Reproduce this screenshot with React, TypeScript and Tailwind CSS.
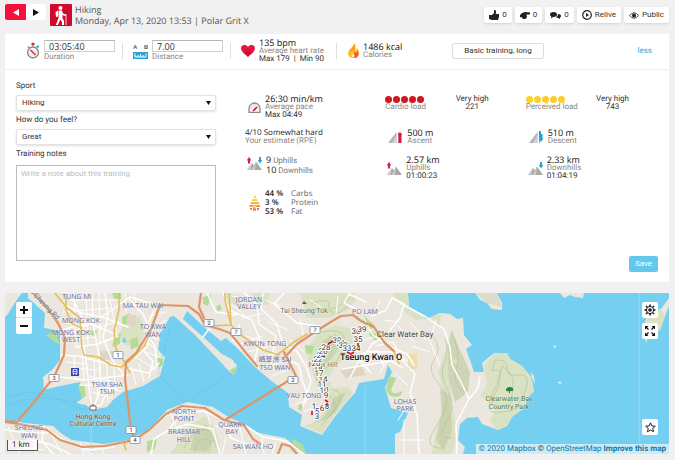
import type { ReactNode } from 'react'

interface StatProps {
  icon?: ReactNode
  value: string
  label: string
  extra?: string
}

interface MapLabel {
  x: number
  y: number
  text: string
}

const DISTRICTS: MapLabel[] = [
  { x: 77, y: 299, text: 'TUNG MI' },
  { x: 143, y: 308, text: 'MA TAU WAI' },
  { x: 81, y: 323, text: 'MONG KOK' },
  { x: 71, y: 335, text: 'MONG KOK' },
  { x: 71, y: 342, text: 'WEST' },
  { x: 153, y: 329, text: 'TO KWA' },
  { x: 153, y: 337, text: 'WAN' },
  { x: 107, y: 387, text: 'TSIM SHA' },
  { x: 107, y: 394, text: 'TSUI' },
  { x: 29, y: 430, text: 'SHEUNG' },
  { x: 29, y: 438, text: 'WAN' },
  { x: 184, y: 414, text: 'NORTH' },
  { x: 184, y: 421, text: 'POINT' },
  { x: 184, y: 434, text: 'BRAEMAR' },
  { x: 184, y: 442, text: 'HILL' },
  { x: 232, y: 427, text: 'QUARRY' },
  { x: 232, y: 434, text: 'BAY' },
  { x: 253, y: 449, text: 'SAI WAN HO' },
  { x: 249, y: 302, text: 'JORDAN' },
  { x: 249, y: 309, text: 'VALLEY' },
  { x: 265, y: 346, text: 'KWUN TONG' },
  { x: 275, y: 362, text: '晒草灣 SAI' },
  { x: 275, y: 370, text: 'TSO WAN' },
  { x: 304, y: 398, text: 'YAU TONG' },
  { x: 365, y: 314, text: 'PO LAM' },
  { x: 405, y: 404, text: 'LOHAS' },
  { x: 405, y: 411, text: 'PARK' },
]

const SHIELDS: MapLabel[] = [
  { x: 209, y: 323, text: '2' },
  { x: 118, y: 355, text: '1' },
  { x: 54, y: 378, text: '3' },
  { x: 131, y: 430, text: '1' },
  { x: 135, y: 440, text: '4' },
  { x: 236, y: 332, text: '7' },
  { x: 315, y: 330, text: '7' },
  { x: 293, y: 380, text: '2' },
]

const LAPS: MapLabel[] = [
  { x: 317, y: 414, text: '5' },
  { x: 317, y: 419, text: '3' },
  { x: 314, y: 409, text: '1' },
  { x: 327, y: 409, text: '8' },
  { x: 322, y: 411, text: '6' },
  { x: 324, y: 393, text: '10' },
  { x: 326, y: 398, text: '9' },
  { x: 323, y: 382, text: '14' },
  { x: 322, y: 387, text: '11' },
  { x: 318, y: 371, text: '18' },
  { x: 319, y: 376, text: '17' },
  { x: 316, y: 366, text: '20' },
  { x: 318, y: 362, text: '22' },
  { x: 321, y: 358, text: '24' },
  { x: 323, y: 354, text: '26' },
  { x: 326, y: 350, text: '28' },
  { x: 337, y: 343, text: '30' },
  { x: 341, y: 346, text: '31' },
  { x: 343, y: 348, text: '32' },
  { x: 347, y: 351, text: '33' },
  { x: 356, y: 351, text: '34' },
  { x: 358, y: 342, text: '35' },
  { x: 356, y: 334, text: '36' },
  { x: 362, y: 332, text: '39' },
]

const ISLANDS = [
  // Kowloon and the mainland coast
  'M28 293 L28 298 L45 313 L44 328 L50 329 L60 331 L60 360 L52 370 L43 377 L44 390 L55 387 L80 382 L83 398 L76 403 L86 405 L92 410 L107 407 L113 400 L123 392 L143 386 L160 376 L165 357 L158 350 L160 334 L170 317 L174 316 L195 335 L233 375 L237 371 L233 360 L222 354 L183 319 L187 311 L205 328 L221 341 L226 338 L238 349 L255 367 L270 380 L288 393 L289 407 L302 415 L300 426 L322 435 L334 418 L345 404 L355 393 L359 383 L384 379 L388 365 L392 372 L385 388 L391 408 L408 413 L400 432 L395 434 L395 454 L463 454 L465 447 L458 440 L460 424 L467 418 L478 417 L482 424 L498 430 L507 426 L512 417 L524 408 L528 397 L534 391 L531 377 L522 366 L510 359 L507 353 L494 353 L482 363 L484 372 L474 372 L470 360 L466 349 L472 345 L464 335 L463 318 L457 319 L450 314 L440 313 L426 319 L418 312 L409 307 L408 293 Z',
  // Hong Kong Island
  'M5 420 L25 423 L53 426 L62 434 L72 440 L104 444 L128 440 L146 431 L155 423 L167 410 L187 402 L213 407 L230 418 L245 424 L254 432 L285 438 L306 454 L5 454 Z',
  'M5 293 L22 293 L16 301 L8 314 L5 317 Z',
  'M475 293 L480 300 L487 303 L492 309 L502 310 L502 303 L497 293 Z',
  'M560 293 L564 298 L570 295 L575 297 L583 298 L584 293 Z',
  'M669 298 L661 309 L650 311 L643 326 L646 343 L649 334 L660 330 L665 316 L669 306 Z',
  'M553 345 L556 346 L555 349 Z',
  'M531 372 L534 376 L535 384 L532 378 Z',
  'M557 383 L560 381 L562 384 Z',
  'M225 355 L237 365 L233 374 L224 366 Z',
]

const PARKS = [
  'M300 293 L304 306 L306 318 L330 318 L348 310 L356 300 L354 293 Z',
  'M319 332 L335 325 L350 328 L355 337 L348 358 L335 366 L328 378 L332 388 L348 387 L353 393 L334 416 L322 434 L304 426 L318 420 L328 405 L318 386 L310 366 L306 350 Z',
  'M392 293 L408 293 L409 307 L426 319 L441 314 L440 326 L430 318 L415 320 L405 312 Z',
  'M450 370 L446 350 L438 372 L446 396 L436 430 L432 454 L452 454 L457 436 L455 420 L452 404 Z',
  'M494 353 L507 353 L510 359 L522 366 L531 377 L534 391 L528 397 L524 408 L512 417 L507 426 L498 430 L490 421 L496 407 L480 396 L487 384 L484 366 Z',
  'M192 424 L205 416 L213 425 L219 440 L220 454 L170 454 L180 440 Z',
  'M661 309 L650 311 L643 326 L660 330 L665 316 Z',
  'M126 322 L140 316 L146 330 L140 345 L126 346 L119 334 Z',
  'M225 293 L240 296 L240 306 L228 304 Z',
  'M252 293 L270 293 L268 306 L256 303 Z',
]

const HILLS = [
  'M324 340 L336 334 L340 346 L332 358 L322 366 L316 378 L312 360 Z',
  'M447 345 L452 330 L460 350 L470 372 L468 392 L455 402 L449 380 Z',
  'M440 388 L450 396 L452 430 L444 450 L436 440 L442 414 Z',
  'M322 420 L334 398 L346 392 L336 412 Z',
  'M194 434 L206 424 L214 440 L206 452 L190 450 Z',
]

const GREENS = [
  'M122 317 L130 313 L129 324 L122 325 Z',
  'M112 293 L121 293 L121 299 L114 299 Z',
  'M115 335 L121 333 L120 344 L112 347 Z',
  'M130 340 L137 337 L139 346 L131 350 Z',
  'M147 441 L157 439 L155 449 L147 452 Z',
  'M46 335 L55 331 L60 344 L54 342 Z',
  'M156 359 L162 356 L164 365 L158 367 Z',
  'M90 331 L97 330 L96 336 L91 335 Z',
  'M363 315 L375 326 L370 330 L362 322 Z',
  'M371 330 L380 338 L377 342 L369 335 Z',
  'M305 345 L314 346 L312 354 L306 353 Z',
  'M299 404 L303 405 L301 411 L298 409 Z',
  'M216 307 L220 304 L222 309 L218 312 Z',
  'M203 297 L211 295 L208 306 L203 304 Z',
  'M292 438 L303 445 L306 454 L294 449 Z',
  'M78 386 L84 384 L86 396 L82 398 Z',
  'M230 370 L235 367 L237 371 L233 375 Z',
  'M389 376 L396 378 L391 390 Q392 396 403 391 L400 396 Q389 399 386 390 Z',
]

const MINOR_ROADS = [
  'M70 293 L82 318 L81 332 L86 360 L91 403',
  'M62 304 L82 313 L105 318 L128 327',
  'M60 331 L75 326 L92 324 L117 335',
  'M76 347 L98 344 L118 336',
  'M61 355 L78 356 L101 362 L121 366',
  'M60 377 L84 380 L112 377 L128 375',
  'M92 293 L93 324 L99 355 L101 387 L95 404',
  'M105 293 L108 317 L103 337 L111 358 L124 375',
  'M66 336 L100 318 L130 297 L153 304',
  'M129 299 L143 314 L150 330 L147 347 L130 362',
  'M154 310 L145 332 L155 346 L157 366',
  'M140 347 L153 361 L149 378',
  'M126 368 L148 373 L159 363',
  'M124 385 L107 391 L101 405 L92 407',
  'M80 385 L101 386 L120 391',
  'M207 293 L216 312 L236 315',
  'M223 293 L229 310 L252 320 L260 340 L254 363',
  'M244 293 L257 304 L259 324 L276 336 L271 363',
  'M263 293 L261 309 L277 324 L282 341 L294 351',
  'M284 293 L274 304 L286 314 L297 323 L319 326',
  'M240 325 L233 340 L257 365',
  'M284 358 L299 365 L302 380 L307 393 L303 406',
  'M296 350 L306 366 L311 381 L305 402',
  'M366 302 L349 294 L344 303 L360 311',
  'M372 316 L386 310 L392 298 L404 304 L400 318 L390 330',
  'M363 317 L373 335 L390 347 L407 354 L414 365',
  'M362 360 L372 344 L389 333',
  'M343 369 L366 365 L391 361 L402 367',
  'M350 378 L363 353 L377 351 L384 366',
  'M370 352 L395 352 L407 361',
  'M346 355 L358 358 L371 373',
  'M400 303 L426 317 L444 329 L450 347 L452 365 L462 384 L469 399 L456 424 L457 454',
  'M393 342 L402 360 L415 374 L410 393 L417 415 L419 454',
  'M469 399 L478 388 L480 377',
  'M5 430 L28 433 L53 433 L65 442 L90 450 L114 447',
  'M17 421 L28 439 L49 444 L70 454',
  'M44 426 L42 441 L53 454',
  'M151 454 L154 439 L169 430 L180 414 L203 411 L220 418',
  'M169 431 L187 424 L213 429 L220 454',
  'M224 421 L231 438 L251 446 L272 446',
  'M246 426 L263 437 L286 441 L304 454',
  'M203 337 L209 329',
]

const STREETS = [
  'M74 293 L76 347 M86 293 L88 345 M99 293 L100 345 M110 300 L116 330 M125 293 L126 312 M134 293 L138 312',
  'M63 312 L110 308 M70 300 L120 300 M64 322 L86 330 M68 340 L96 337 M95 328 L118 322',
  'M66 362 L86 364 M70 368 L98 370 M74 357 L75 378 M82 350 L84 380 M94 358 L95 382 M106 360 L108 380 M114 366 L115 390',
  'M90 376 L120 384 M92 392 L112 398 M97 380 L98 400 M106 382 L108 402 M131 366 L136 384 M139 364 L144 382 M146 352 L162 358 M134 356 L156 370',
  'M158 325 L166 320 M148 336 L160 340 M146 342 L158 350 M150 316 L166 312',
  'M8 426 L20 454 M32 425 L36 454 M48 428 L62 454 M60 438 L92 454 M80 443 L84 454 M100 446 L104 454 M12 446 L44 450',
  'M160 418 L200 406 M170 411 L176 426 M190 405 L192 420 M206 408 L210 424 M216 426 L240 430 M226 438 L222 454 M240 428 L246 454 M262 438 L264 454 M276 442 L272 454',
  'M232 296 L256 300 M230 303 L246 316 M242 318 L262 314 M266 300 L280 306 M268 322 L288 330 M246 336 L266 342 M240 344 L262 336 M248 352 L270 346 M258 360 L276 352 M264 368 L282 362 M272 376 L292 368 M280 384 L298 376 M290 340 L304 352 M300 320 L304 338',
  'M364 340 L384 334 M376 346 L392 342 M360 366 L378 356 M380 372 L392 354 M398 326 L414 342 M380 300 L376 312 M384 320 L398 322 M410 322 L426 340 M404 420 L404 454 M411 400 L398 420 M400 440 L424 440 M428 336 L440 366 M412 346 L430 352',
  'M296 404 L312 398 M304 412 L312 408 M310 300 L322 308 M338 296 L336 314 M396 374 L408 386 M436 320 L432 334',
]

const YELLOW_ROADS = [
  'M55 293 L66 307 L80 318 L82 348 L84 355 L98 357 L111 365 L121 367 L131 360 L145 345 L151 330',
  'M119 293 L119 310 L114 331 L116 349 L125 363 L130 373',
  'M66 295 L66 310 L72 324 L82 328',
  'M225 293 L225 300 L231 325 L239 334 L263 350 L279 355',
  'M277 355 L294 342 L307 334',
  'M371 323 L386 345 L395 353 L399 364',
  'M229 293 L231 325 L210 326',
  'M130 438 L124 444 L126 450',
]

const ORANGE_ROADS = [
  'M33 293 L45 305 L58 323 L65 338 L64 355 L54 377 L35 401 L17 422 L5 421',
  'M160 305 L188 306 L199 314 L205 325 L219 329 L230 333 L246 353 L257 366 M289 362 L296 376 L270 392 L225 420 M284 352 L289 362',
  'M201 293 L199 307 L204 318',
  'M160 305 L151 329 L136 353 L126 362 L125 379 L131 430 L136 441',
  'M284 358 L297 344 L315 332 L329 323 L341 316 L353 315 L361 321 L374 327 L384 342 L394 351',
  'M5 422 L25 425 L47 430 L60 440 L82 447 L105 446 L134 440 L149 430 L166 414 L182 406 L205 408 L224 420 L244 425 L253 439 L260 444',
  'M278 454 L282 444 L290 446 L297 454',
]

const CONTOURS = [
  'M434 337 Q442 350 434 360 T440 385 T437 425 T444 448',
  'M445 338 Q449 353 444 364 T448 391 T446 423 T452 438',
  'M455 340 Q460 360 456 370 T462 392',
  'M495 360 Q508 359 507 368 T519 375 T525 391 T510 411 T493 412 T495 388 T492 371 Z',
  'M502 366 Q514 373 513 384 T512 400 T499 407 T498 388 Z',
  'M321 332 Q342 328 344 337 T340 356 T319 371',
  'M328 336 Q336 336 331 344 T318 356 T318 386',
  'M320 394 Q333 393 335 405 T315 422',
  'M333 390 Q344 392 339 402 T321 426',
  'M311 303 Q331 297 329 306 T350 298',
  'M313 310 Q327 307 332 312 T350 304',
  'M184 448 Q190 434 201 430 T216 448',
  'M194 453 Q198 438 206 439 T209 453',
]

const valueClass = "font-['Open_Sans',sans-serif] text-[9px] font-medium text-[#111]"

const inputClass =
  "block h-3 w-full rounded-none border border-[#cfcfcf] border-t-[#b5b5b5] bg-white px-1 font-['Open_Sans',sans-serif] text-[9px] leading-[10px] text-[#333] outline-none"

function Stopwatch() {
  return (
    <svg width="14" height="17" viewBox="0 0 14 17" className="shrink-0" aria-hidden="true">
      <path d="M5.5 2 H8.5" stroke="#d6213a" strokeWidth="2.4" />
      <path d="M7 3 V5" stroke="#999" strokeWidth="1.5" />
      <path d="M2 4.5 l1.5 1.5" stroke="#888" strokeWidth="1.5" />
      <path d="M10.8 5.5 l1.8 -1.8" stroke="#35a7d8" strokeWidth="2" />
      <circle cx="7" cy="10.5" r="5.4" fill="#fff" stroke="#8b8b8b" strokeWidth="1.5" />
      <circle cx="7" cy="10.5" r="3.8" fill="#ececec" />
      <path d="M4.5 8 L9.5 13" stroke="#d6213a" strokeWidth="1.3" />
    </svg>
  )
}

function Ruler() {
  return (
    <svg width="15" height="16" viewBox="0 0 15 16" className="shrink-0" aria-hidden="true">
      <text x="0" y="6" fontSize="6" fontWeight="bold" fontFamily="Liberation Sans" fill="#666">A</text>
      <text x="11" y="6" fontSize="6" fontWeight="bold" fontFamily="Liberation Sans" fill="#666">B</text>
      <rect y="9" width="15" height="7" fill="#27a5d8" />
      <path d="M2 10.5 v3.5 h11 v-3.5 M5 14 v-2 M7.5 14 v-3 M10 14 v-2" stroke="#fff" fill="none" />
    </svg>
  )
}

function Heart() {
  return (
    <svg width="14" height="12" viewBox="0 0 14 12" className="shrink-0" aria-hidden="true">
      <path d="M7 12 C5.5 10 0 7.2 0 3.5 C0 -.5 5 -1 7 2 C9 -1 14 -.5 14 3.5 C14 7.2 8.5 10 7 12Z" fill="#e8113f" />
      <path d="M7 5 L11 7.5 L7 12 L3 7.5Z" fill="#b90d2d" opacity=".6" />
    </svg>
  )
}

function Flame() {
  return (
    <svg width="11" height="15" viewBox="0 0 11 15" className="shrink-0" aria-hidden="true">
      <path d="M6 0 C6 4 1 5 0 10 C-.2 13 2 15 5 15 C9 15 11 13 11 10 C11 8 10 7 9.5 5 C8.5 6 8.5 7 7.5 7.5 C7 5 8 3 6 0Z" fill="#fbc02a" />
      <path d="M6 0 C6.5 4 2 6 1.5 10 C3 8 5 7 7.5 7.5 C7 5 8 3 6 0Z" fill="#f9a01b" />
      <path d="M9.5 7 C12 11 10 15 6 15 L4 14.5 C7 12.5 4.5 11 6.5 8.5 C7 10.5 9 10.5 9.5 7Z" fill="#ee5a24" />
      <path d="M5.5 10 C3.5 12 3.5 13.5 5 15 C7.5 13.5 6.5 12 5.5 10Z" fill="#fff3b0" />
    </svg>
  )
}

function StripedFlame() {
  return (
    <svg width="11" height="16" viewBox="0 0 11 16" className="shrink-0" aria-hidden="true">
      <path d="M6 0 L7.5 3 H4.5Z M4 4 H8 L9 6 H2.5Z" fill="#f9cf45" />
      <path d="M2 7 H9.5 L10.5 9 H1Z" fill="#f6b92c" />
      <path d="M.5 10 H11 V12 H7.5 L5.5 10.5 L3.5 12 H.5Z" fill="#f59a32" />
      <path d="M.5 13 H3 V15 L1.5 14.5Z M4 16 L4.5 12.5 L5.5 11.5 L6.5 13 L7 16 H6 L5.5 14 L5 16Z M8 13 H10.5 L9.5 15 L8 15.5Z" fill="#ec6a3c" />
    </svg>
  )
}

function Gauge() {
  return (
    <svg width="13" height="11" viewBox="0 0 13 11" className="shrink-0" aria-hidden="true">
      <path d="M1 10.3 V6.5 A5.5 5.5 0 0 1 12 6.5 V10.3Z" fill="#f7f7f7" stroke="#8b8b8b" strokeWidth="1.3" />
      <path d="M3 6.5 A3.5 3.5 0 0 1 10 6.5" fill="none" stroke="#aaa" strokeDasharray="1 1" />
      <path d="M5 9 L9 5" stroke="#d90f35" strokeWidth="1.6" />
    </svg>
  )
}

function Arrow({ x, up }: { x: number; up?: boolean }) {
  return up ? (
    <path d={`M${x} 3 l2 -3 l2 3 v.5 h-1 v3 h-2 v-3 h-1Z`} fill="#dc1a43" />
  ) : (
    <path d={`M${x} 3 h1 v-3 h2 v3 h1 v.5 l-2 3 l-2 -3Z`} fill="#25a3d9" />
  )
}

function Hills({ up, down }: { up?: boolean; down?: boolean }) {
  return (
    <svg width="15" height="13" viewBox="0 0 15 13" className="shrink-0" aria-hidden="true">
      <path d="M0 13 L5 6 L7 8.5 L9 4.5 L15 13Z" fill="#a9a9a9" />
      <path d="M5 6 L3.5 13 H0Z M9 4.5 L8 13 H4.5 L7 8.5Z" fill="#cbcbcb" />
      {up && <Arrow x={0} up />}
      {down && <Arrow x={11} />}
    </svg>
  )
}

function Slope({ up }: { up?: boolean }) {
  return (
    <svg width="15" height="12" viewBox="0 0 15 12" className="shrink-0" aria-hidden="true">
      <path d="M0 12 L8.5 1 V12Z" fill="#b4b4b4" />
      <path d="M4 12 L8.5 4 V12Z" fill="#d2d2d2" />
      <path d="M10 1 h1 v11 h-1Z" fill="#b4b4b4" />
      {up ? (
        <path d="M10.5 12 V4 H9.5 L12 1 L14.5 4 H13.5 V12Z" fill="#dc1a43" />
      ) : (
        <path d="M10 0 H12 V3 H13.5 V7 H14.5 L12 11 L10 9Z" fill="#25a3d9" />
      )}
    </svg>
  )
}

function Stat({ icon, value, label, extra }: StatProps) {
  return (
    <div className="flex items-center gap-1">
      {icon}
      <div className="leading-[8px] whitespace-nowrap">
        <p className={valueClass}>{value}</p>
        <p className="text-[#888]">{label}</p>
        {extra && <p>{extra}</p>}
      </div>
    </div>
  )
}

function Load({ label, value, color }: { label: string; value: number; color: string }) {
  return (
    <div className="flex items-start justify-between pr-[37px] leading-[8px] whitespace-nowrap">
      <div>
        <div className="flex h-2 items-center gap-px">
          {[1, 2, 3, 4, 5].map(dot => (
            <span key={dot} className={`size-[7px] rounded-full ${color}`} />
          ))}
        </div>
        <p className="text-[#888]">{label}</p>
      </div>
      <p className="text-center">Very high<br />{value}</p>
    </div>
  )
}

function SelectField({ id, label, options }: { id: string; label: string; options: string[] }) {
  return (
    <div className="mb-1">
      <label htmlFor={id} className="mb-1 block leading-[10px]">{label}</label>
      <div className="relative">
        <select id={id} className="block h-4 w-full appearance-none rounded-xs border border-[#e2e2e2] bg-white px-[5px] text-[8px] leading-[14px] shadow-sm">
          {options.map(option => <option key={option}>{option}</option>)}
        </select>
        <svg width="5" height="4" viewBox="0 0 5 4" className="pointer-events-none absolute top-1.5 right-[5px]" aria-hidden="true">
          <path d="M0 0 H5 L2.5 4Z" fill="#111" />
        </svg>
      </div>
    </div>
  )
}

function Divider() {
  return <span className="h-4 w-px shrink-0 bg-[#e0e0e0]" />
}

function Header() {
  const pill = 'flex h-4 items-center gap-[3px] rounded-xs bg-white px-[5px] shadow-sm whitespace-nowrap'
  return (
    <header className="flex items-start justify-between pt-1">
      <div className="flex">
        <button aria-label="Previous" className="flex h-4 w-[21px] items-center justify-center rounded-l-xs bg-[#f5103d]">
          <svg width="6" height="7" viewBox="0 0 6 7"><path d="M6 0 V7 L0 3.5Z" fill="#fff" /></svg>
        </button>
        <button aria-label="Next" className="flex h-4 w-5 items-center justify-center rounded-r-xs bg-white">
          <svg width="6" height="7" viewBox="0 0 6 7"><path d="M0 0 V7 L6 3.5Z" fill="#111" /></svg>
        </button>
        <svg width="22" height="22" viewBox="0 0 22 22" className="ml-1 shrink-0" aria-hidden="true">
          <rect width="22" height="22" rx="1" fill="#cf0a2c" />
          <circle cx="10.5" cy="4" r="2" fill="#fff" />
          <path d="M5.5 8 L8 6.5 V12.5 L6 13Z" fill="#fff" />
          <path d="M8.5 6.5 H12 L13 9.5 L16 10.5 V12 L12.5 11.2 V14 L14 17 V21 H12 V18 L10.3 15.5 L8 21 H5.8 L8.5 14Z" fill="#fff" />
          <path d="M16 10 V21" stroke="#fff" strokeWidth=".8" />
        </svg>
        <div className="ml-[3px] font-['Open_Sans',sans-serif] text-[9px] leading-[11px] whitespace-nowrap text-[#555]">
          <h1>Hiking</h1>
          <p>Monday, Apr 13, 2020 13:53 | Polar Grit X</p>
        </div>
      </div>
      <div className="flex gap-[3px] pt-[3px]">
        <button className={pill} aria-label="Likes">
          <svg width="10" height="10" viewBox="0 0 10 10"><path d="M0 5 H3 L5 3 V0 H6 Q8 1 6.5 4 H10 V7 L9 10 H3 L0 9Z" fill="#222" /></svg>
          0
        </button>
        <button className={pill} aria-label="Pokes">
          <svg width="10" height="7" viewBox="0 0 10 7"><path d="M0 3 L2 1 L5 0 L10 .5 V2.5 H6.5 L7 5 L5.5 7 H3 L2 5.5 L0 5Z" fill="#222" /></svg>
          0
        </button>
        <button className={pill} aria-label="Comments">
          <svg width="11" height="8" viewBox="0 0 11 8"><path d="M0 3.5 Q0 1 3.5 1 Q7 1 7 3.5 Q7 6 3 6 L1 7.5 L1.3 5.5 Q0 5 0 3.5Z M8 3 Q11 3 11 5 Q11 6 10 6.5 V8 L8.5 7 Q7 7 6 6.3 Q8 5.5 8 3Z" fill="#222" /></svg>
          0
        </button>
        <button className={pill}>
          <svg width="10" height="10" viewBox="0 0 10 10"><circle cx="5" cy="5" r="4.3" fill="none" stroke="#222" strokeWidth="1.2" /><path d="M4 3 V7 L7 5Z" fill="#222" /></svg>
          Relive
        </button>
        <button className={pill}>
          <svg width="10" height="7" viewBox="0 0 10 7"><path d="M.5 3.5 Q5 -2 9.5 3.5 Q5 9 .5 3.5Z" fill="none" stroke="#444" /><circle cx="5" cy="3.5" r="2" fill="#222" /></svg>
          Public
        </button>
      </div>
    </header>
  )
}

function Summary() {
  return (
    <div className="flex h-9 items-center border-b border-[#eee] pr-[17px] pb-[2px] pl-[21px] whitespace-nowrap">
      <Stopwatch />
      <div className="ml-1 w-[71px] leading-[9px]">
        <input id="duration" defaultValue="03:05:40" className={inputClass} />
        <label htmlFor="duration" className="block text-[#888]">Duration</label>
      </div>
      <span className="w-[7px]" />
      <Divider />
      <span className="w-[10px]" />
      <Ruler />
      <div className="ml-1 w-[71px] leading-[9px]">
        <input id="distance" defaultValue="7.00" className={inputClass} />
        <label htmlFor="distance" className="block text-[#888]">Distance</label>
      </div>
      <span className="w-[7px]" />
      <Divider />
      <span className="w-[10px]" />
      <div className="w-[85px]">
        <Stat icon={<Heart />} value="135 bpm" label="Average heart rate" extra="Max 179 &nbsp;|&nbsp; Min 90" />
      </div>
      <span className="w-[10px]" />
      <Divider />
      <span className="w-[11px]" />
      <div className="w-[58px]">
        <Stat icon={<Flame />} value="1486 kcal" label="Calories" />
      </div>
      <button className="ml-[46px] h-4 w-[92px] rounded-xs border border-[#ddd] bg-white">Basic training, long</button>
      <a href="#less" className="ml-auto text-[#2ba9d8]">less</a>
    </div>
  )
}

function Details() {
  return (
    <div className="flex px-[11px] pt-[11px] pb-[10px]">
      <form className="w-[200px] shrink-0">
        <SelectField id="sport" label="Sport" options={['Hiking', 'Running', 'Cycling']} />
        <SelectField id="feeling" label="How do you feel?" options={['Great', 'Good', 'OK']} />
        <label htmlFor="notes" className="block leading-[10px]">Training notes</label>
        <textarea
          id="notes"
          placeholder="Write a note about this training"
          className="mt-[6px] mb-[11px] block h-24 w-full resize-none border border-[#bbb] px-1 py-[3px] text-[8px] leading-[10px] placeholder:text-[#bbb]"
        />
      </form>
      <div className="flex min-w-0 grow flex-col justify-between pl-[29px]">
        <div className="-mr-2 grid grid-cols-3 pt-[14px]">
          <div className="flex flex-col">
            <div className="h-[34px] pl-[3px]">
              <Stat icon={<Gauge />} value="26:30 min/km" label="Average pace" extra="Max 04:49" />
            </div>
            <div className="h-[26px] leading-[8px] whitespace-nowrap">
              <p className="font-['Open_Sans',sans-serif] text-[#222]">4/10 Somewhat hard</p>
              <p className="text-[#888]">Your estimate (RPE)</p>
            </div>
            <div className="flex h-[34px] items-start gap-1 pl-[2px] whitespace-nowrap text-[#777]">
              <div className="pt-[2px]"><Hills up down /></div>
              <div className="leading-[9px]">
                <p><b className={valueClass}>9</b> Uphills</p>
                <p><b className={valueClass}>10</b> Downhills</p>
              </div>
            </div>
            <div className="flex items-center gap-[5px] pl-[4px] font-['Open_Sans',sans-serif] leading-[9px] whitespace-nowrap">
              <StripedFlame />
              <div className="w-[21px] font-semibold text-[#222]">
                <p>44 %</p>
                <p>3 %</p>
                <p>53 %</p>
              </div>
              <div className="text-[#666]">
                <p>Carbs</p>
                <p>Protein</p>
                <p>Fat</p>
              </div>
            </div>
          </div>
          <div>
            <div className="h-[34px]"><Load label="Cardio load" value={221} color="bg-[#d4141f]" /></div>
            <div className="h-[27px] pl-[3px]"><Stat icon={<Slope up />} value="500 m" label="Ascent" /></div>
            <div className="pl-[2px]"><Stat icon={<Hills up />} value="2.57 km" label="Uphills" extra="01:00:23" /></div>
          </div>
          <div>
            <div className="h-[34px]"><Load label="Perceived load" value={743} color="bg-[#fbcf2c]" /></div>
            <div className="h-[27px] pl-[3px]"><Stat icon={<Slope />} value="510 m" label="Descent" /></div>
            <div className="pl-[2px]"><Stat icon={<Hills down />} value="2.33 km" label="Downhills" extra="01:04:19" /></div>
          </div>
        </div>
        <button className="h-4 self-end rounded-xs bg-[#62c8ec] px-[6px] text-white">Save</button>
      </div>
    </div>
  )
}

function RoadPaths({ paths, color, width }: { paths: string[]; color: string; width: number }) {
  return (
    <g fill="none" stroke={color} strokeWidth={width} strokeLinejoin="round" strokeLinecap="round">
      {paths.map(d => <path key={d} d={d} />)}
    </g>
  )
}

function MapDrawing() {
  return (
    <svg viewBox="5 293 664 161" preserveAspectRatio="xMidYMid slice" className="block size-full" role="img" aria-label="Route map">
      <rect x="5" y="293" width="664" height="161" fill="#75cff0" />
      <g fill="#ebe7df">{ISLANDS.map(d => <path key={d} d={d} />)}</g>
      <g fill="#dbe2c4">{PARKS.map(d => <path key={d} d={d} />)}</g>
      <g fill="#c3cda6" opacity=".7">{HILLS.map(d => <path key={d} d={d} />)}</g>
      <g fill="#b4dc96">{GREENS.map(d => <path key={d} d={d} />)}</g>
      <path d="M475 293 L487 303 L502 307 L497 293Z" fill="#dcdcca" />
      <path d="M453 359 h5 v5 h-5Z M408 354 h9 v15 h-9Z" fill="#eedcae" />
      <path d="M100 351 h12 v9 h-12Z M340 371 l20 -7 6 11 -20 3Z M127 315 h9 v10 h-9Z" fill="#dfd5c4" />
      <path d="M122 341 l2 -4 3 5 -3 1Z" fill="#75cff0" />
      <g fill="none" stroke="#b6bf9c" strokeWidth=".8" opacity=".8">{CONTOURS.map(d => <path key={d} d={d} />)}</g>
      <path d="M5 400 Q30 385 60 400 T85 405 M5 406 Q40 391 80 404 M184 403 L158 373 L170 330 M184 403 L245 365" fill="none" stroke="#54b2df" strokeWidth=".5" opacity=".6" />
      <path d="M91 410 V454 M365 385 V454 M639 293 V454" stroke="#a8def2" strokeWidth=".7" />
      <RoadPaths paths={STREETS} color="#fff" width={1} />
      <RoadPaths paths={MINOR_ROADS} color="#fff" width={1.5} />
      <RoadPaths paths={YELLOW_ROADS} color="#e4bf5c" width={1.6} />
      <RoadPaths paths={ORANGE_ROADS} color="#df9468" width={2.2} />

      <g
        fontFamily="'Open Sans', 'Noto Sans CJK TC', sans-serif"
        fontSize="7"
        fill="#5d6496"
        stroke="#fff"
        strokeWidth="1"
        strokeOpacity=".4"
        paintOrder="stroke"
        textAnchor="middle"
      >
        {DISTRICTS.map(label => <text key={`${label.x}-${label.y}`} x={label.x} y={label.y}>{label.text}</text>)}
      </g>
      <g fontFamily="Roboto, sans-serif" stroke="#fff" strokeWidth="1" strokeOpacity=".4" paintOrder="stroke" textAnchor="middle" fontSize="7">
        <text x="93" y="419" fill="#8c6656" fontWeight="500">Hong Kong</text>
        <text x="93" y="426" fill="#8c6656" fontWeight="500">Cultural Centre</text>
        <text x="304" y="313" fill="#796b62">Tai Sheung Tok</text>
        <text x="323" y="367" fill="#9a7b65">Black Hill</text>
        <text x="509" y="401" fill="#4a7d38">Clearwater Bay</text>
        <text x="509" y="409" fill="#4a7d38">Country Park</text>
        <text x="405" y="337" fontSize="8" fill="#444">Clear Water Bay</text>
        <text fill="#666" transform="translate(43 306) rotate(46)">n Cheung Rd</text>
      </g>
      <path d="M302 304 L304 301 L307 304Z" fill="#6d5b50" />
      <path d="M90 406 h6 v4 h-6Z M92 406 v-1 h2 v1" fill="#fff" stroke="#806858" />
      <path d="M506 390 Q506 387 510 387 Q514 387 513 391 H510 V393 H509 V391 Q506 392 506 390Z" fill="#268736" />
      <rect x="71" y="368" width="8" height="8" fill="#3845aa" />
      <path d="M73 369.5 h4 v4 h-4Z M73 375 l1 -1 M77 375 l-1 -1 M73 371.5 h4" fill="none" stroke="#fff" strokeWidth=".8" />

      {SHIELDS.map(shield => (
        <g key={`${shield.x}-${shield.y}`}>
          <rect x={shield.x - 5} y={shield.y - 3.5} width="10" height="7" rx="1" fill="#fff" stroke="#8288a0" strokeWidth=".8" />
          <text x={shield.x} y={shield.y + 2} textAnchor="middle" fontFamily="Roboto, sans-serif" fontSize="6" fontWeight="500" fill="#555d78">{shield.text}</text>
        </g>
      ))}

      <g fontFamily="Roboto, sans-serif" fontSize="8" fill="#333" stroke="#fff" strokeWidth="2" paintOrder="stroke" strokeLinejoin="round" textAnchor="middle">
        {LAPS.map(lap => <text key={lap.text} x={lap.x} y={lap.y}>{lap.text}</text>)}
      </g>
      <path d="M312 411 V415 M325 400 L328 402 M326 404 L328 405 M328 344 L333 341 M347 352 L351 354 L354 352 M358 343 V346" fill="none" stroke="#d70d36" strokeWidth="1.6" />
      <text x="371" y="360" textAnchor="middle" fontFamily="Roboto, sans-serif" fontSize="9" fontWeight="500" fill="#111" stroke="#fff" strokeWidth="1" strokeOpacity=".7" paintOrder="stroke">Tseung Kwan O</text>
    </svg>
  )
}

function RouteMap() {
  const control = 'flex size-4 items-center justify-center rounded-xs bg-white'
  return (
    <section className="relative mt-[11px] h-[161px] overflow-hidden">
      <MapDrawing />
      <div className="absolute top-[9px] left-[11px] flex w-4 flex-col divide-y divide-[#ddd] rounded-xs bg-white">
        <button className="flex h-4 items-center justify-center" aria-label="Zoom in">
          <svg width="8" height="8" viewBox="0 0 8 8"><path d="M0 4 H8 M4 0 V8" stroke="#111" strokeWidth="2" /></svg>
        </button>
        <button className="flex h-4 items-center justify-center" aria-label="Zoom out">
          <svg width="8" height="8" viewBox="0 0 8 8"><path d="M0 4 H8" stroke="#111" strokeWidth="2" /></svg>
        </button>
      </div>
      <div className="absolute top-[9px] right-[11px] flex flex-col gap-[5px]">
        <button className={control} aria-label="Map settings">
          <svg width="12" height="12" viewBox="0 0 12 12">
            <circle cx="6" cy="6" r="3.6" fill="none" stroke="#111" />
            <circle cx="6" cy="6" r="1.8" fill="#222" />
            <path d="M6 .5 V2 M6 10 V11.5 M.5 6 H2 M10 6 H11.5 M2 2 L3.2 3.2 M9 9 L10 10 M2 10 L3.2 8.8 M9 3 L10 2" stroke="#111" strokeWidth="1.5" />
          </svg>
        </button>
        <button className={control} aria-label="Full screen">
          <svg width="12" height="12" viewBox="0 0 12 12">
            <path d="M1 4.5 V1 H4.5Z M7.5 1 H11 V4.5Z M1 7.5 V11 H4.5Z M11 7.5 V11 H7.5Z" fill="#111" />
            <path d="M2 2 L4.5 4.5 M10 2 L7.5 4.5 M2 10 L4.5 7.5 M10 10 L7.5 7.5" stroke="#111" strokeWidth="1.2" />
          </svg>
        </button>
      </div>
      <button className={`${control} absolute right-[11px] bottom-[19px]`} aria-label="Favourite">
        <svg width="11" height="11" viewBox="0 0 11 11"><path d="M5.5 .8 L6.9 4 L10.3 4.2 L7.7 6.4 L8.6 9.8 L5.5 8 L2.4 9.8 L3.3 6.4 L.7 4.2 L4.1 4Z" fill="none" stroke="#222" /></svg>
      </button>
      <div className="absolute bottom-[3px] left-[2px] h-[11px] w-[31px] border border-t-0 border-[#555] bg-white/60 px-1 leading-[9px]">1 km</div>
      <div className="absolute right-0 bottom-0 bg-white/60 px-[3px] leading-[10px] whitespace-nowrap text-[#16759e]">
        <a href="#mapbox">© 2020 Mapbox</a> <a href="#osm"><span className="text-[#333]">©</span> OpenStreetMap</a> <a href="#improve" className="font-bold">Improve this map</a>
      </div>
    </section>
  )
}

export default function App() {
  return (
    <main className="min-h-screen bg-[#f1f1f1] pr-[6px] pb-[6px] pl-[5px] font-[Roboto,'Liberation_Sans',sans-serif] text-[8px] text-[#333] [text-rendering:geometricPrecision]">
      <Header />
      <section className="mt-2 bg-white">
        <Summary />
        <Details />
      </section>
      <RouteMap />
    </main>
  )
}
